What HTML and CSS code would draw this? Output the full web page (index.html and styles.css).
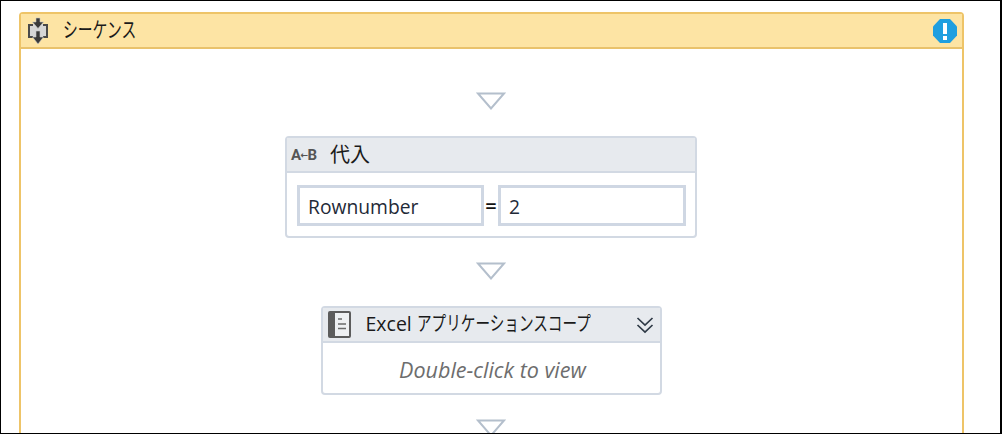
FILE: index.html
```html
<!DOCTYPE html>
<html lang="ja">
<head>
<meta charset="utf-8">
<title>シーケンス</title>
<link rel="stylesheet" href="styles.css">
</head>
<body>
<div class="frame">
  <section class="sequence">
    <header class="seq-head">
      <svg class="seq-icon" width="24" height="28" viewBox="0 0 24 28">
        <rect x="3" y="7" width="18" height="14" fill="#d6d6d6"/>
        <path d="M7 8H3v12h4M17 8h4v12h-4" fill="none" stroke="#4a4a4a" stroke-width="2"/>
        <path d="M10 1h4v4h3.500L12 11.500 6.500 5H10z" fill="#3a3a3a" stroke="#c8c8c8" stroke-width="0.600"/>
        <path d="M10 14h4v6h3.500L12 27l-5.500-7H10z" fill="#3a3a3a" stroke="#c8c8c8" stroke-width="0.600"/>
      </svg>
      <span class="seq-title"><span class="narrow seq-kana">シーケンス</span></span>
      <svg class="alert" width="26" height="26" viewBox="0 0 26 26">
        <path d="M8 1h10l7 7.500v9L18 25H8l-7-7.500v-9z" fill="#1f9fe0"/>
        <rect x="11" y="5" width="4" height="11" fill="#fff"/>
        <rect x="11" y="18" width="4" height="4" fill="#fff"/>
      </svg>
    </header>
    <div class="seq-body">
      <svg class="drop" width="30" height="18" viewBox="0 0 30 18"><path d="M2 1.500h26L15 16.500z" fill="#fff" stroke="#b4bfcc" stroke-width="2"/></svg>
      <article class="card assign">
        <div class="card-head">
          <span class="ab">A<span class="ab-arrow">←</span>B</span>
          <span class="card-title">代入</span>
        </div>
        <div class="assign-row">
          <div class="field">Rownumber</div>
          <span class="eq">=</span>
          <div class="field field-wide">2</div>
        </div>
      </article>
      <svg class="drop" width="30" height="18" viewBox="0 0 30 18"><path d="M2 1.500h26L15 16.500z" fill="#fff" stroke="#b4bfcc" stroke-width="2"/></svg>
      <article class="card scope">
        <div class="card-head">
          <svg class="book" width="23" height="27" viewBox="0 0 23 27">
            <rect x="0" y="0" width="23" height="27" rx="2" fill="#5c5c5c"/>
            <rect x="7" y="2" width="14" height="23" fill="#eef0f2"/>
            <path d="M10 8h4M10 13h8M10 17.500h8" stroke="#6a6a6a" stroke-width="1.500"/>
          </svg>
          <span class="scope-title">Excel <span class="narrow scope-kana">アプリケーションスコープ</span></span>
          <svg class="chev" width="18" height="18" viewBox="0 0 18 18"><path d="M1.500 2l7.500 7 7.500-7M1.500 9l7.500 7 7.500-7" fill="none" stroke="#2f3a46" stroke-width="1.700"/></svg>
        </div>
        <div class="hint">Double-click to view</div>
      </article>
      <svg class="drop" width="30" height="18" viewBox="0 0 30 18"><path d="M2 1.500h26L15 16.500z" fill="#fff" stroke="#b4bfcc" stroke-width="2"/></svg>
    </div>
  </section>
</div>
</body>
</html>
```
FILE: styles.css
```css
html, body {
  margin: 0;
  padding: 0;
  height: 434px;
  overflow: hidden;
  background: #fff;
}
body {
  font-family: "Open Sans", "Noto Sans CJK JP", sans-serif;
  color: #1a1a1a;
}
.frame {
  box-sizing: border-box;
  width: 1002px;
  height: 434px;
  border: 1px solid #000;
  border-right-width: 2px;
  padding: 11px 0 0 18px;
  overflow: hidden;
}
.sequence {
  box-sizing: border-box;
  width: 945px;
  height: 480px;
  border: 2px solid #eec468;
  border-radius: 4px 4px 0 0;
  background: #fff;
}
.seq-head {
  box-sizing: border-box;
  display: flex;
  align-items: center;
  height: 35px;
  background: #fde4a4;
  border-bottom: 2px solid #e9c26c;
  padding: 0 4px 0 5px;
}
.seq-icon { flex: none; }
.narrow {
  display: inline-block;
  transform-origin: left center;
  font-family: "Noto Sans CJK JP", sans-serif;
  white-space: nowrap;
}
.seq-title {
  margin: 0 0 2px 13px;
  flex: 1;
  min-width: 0;
  color: #1a1a1a;
  line-height: 28px;
}
.seq-kana {
  font-size: 21px;
  transform: scaleX(0.705);
}
.alert { flex: none; }
.seq-body {
  display: flex;
  flex-direction: column;
  align-items: center;
  padding-top: 43px;
  margin-left: -1px;
}
.drop { display: block; flex: none; }
.card {
  box-sizing: border-box;
  border: 2px solid #d2d9e3;
  border-radius: 4px;
  background: #fff;
  margin: 26px 0 24px;
}
.assign { width: 412px; height: 102px; }
.scope { width: 341px; height: 89px; }
.card-head {
  box-sizing: border-box;
  display: flex;
  align-items: center;
  height: 35px;
  background: #e7eaee;
  border-bottom: 2px solid #d2d9e3;
}
.ab {
  margin-left: 4px;
  font-family: Roboto, sans-serif;
  font-size: 15px;
  font-weight: 700;
  letter-spacing: -0.6px;
  color: #555;
  width: 39px;
  flex: none;
  white-space: nowrap;
}
.ab-arrow {
  font-family: "DejaVu Sans", sans-serif;
  font-size: 9px;
  font-weight: 700;
  vertical-align: 2px;
}
.card-title {
  font-family: "Noto Sans CJK JP", sans-serif;
  font-size: 20px;
  color: #1a1a1a;
  margin-bottom: 2px;
}
.assign-row {
  display: flex;
  align-items: center;
  padding: 12px 9px 0 10px;
}
.field {
  box-sizing: border-box;
  width: 187px;
  height: 41px;
  border: 3px solid #cfd7e3;
  background: #fff;
  padding-left: 8px;
  font-size: 19.300px;
  line-height: 37px;
  color: #1f2a38;
}
.field-wide { flex: 1; }
.eq {
  width: 14px;
  text-align: center;
  font-size: 20px;
  font-weight: 600;
  color: #111;
}
.book { margin-left: 5px; flex: none; }
.scope-title {
  margin: 0 0 2px 15px;
  flex: 1;
  min-width: 0;
  font-size: 19.500px;
  color: #1a1a1a;
  white-space: nowrap;
  line-height: 28px;
}
.scope-kana {
  font-size: 20px;
  transform: scaleX(0.73);
}
.chev { margin-right: 6px; flex: none; }
.hint {
  text-align: center;
  font-size: 21.500px;
  font-style: italic;
  color: #6d6d6d;
  line-height: 50px;
  padding: 2px 0 0 3px;
}
```
